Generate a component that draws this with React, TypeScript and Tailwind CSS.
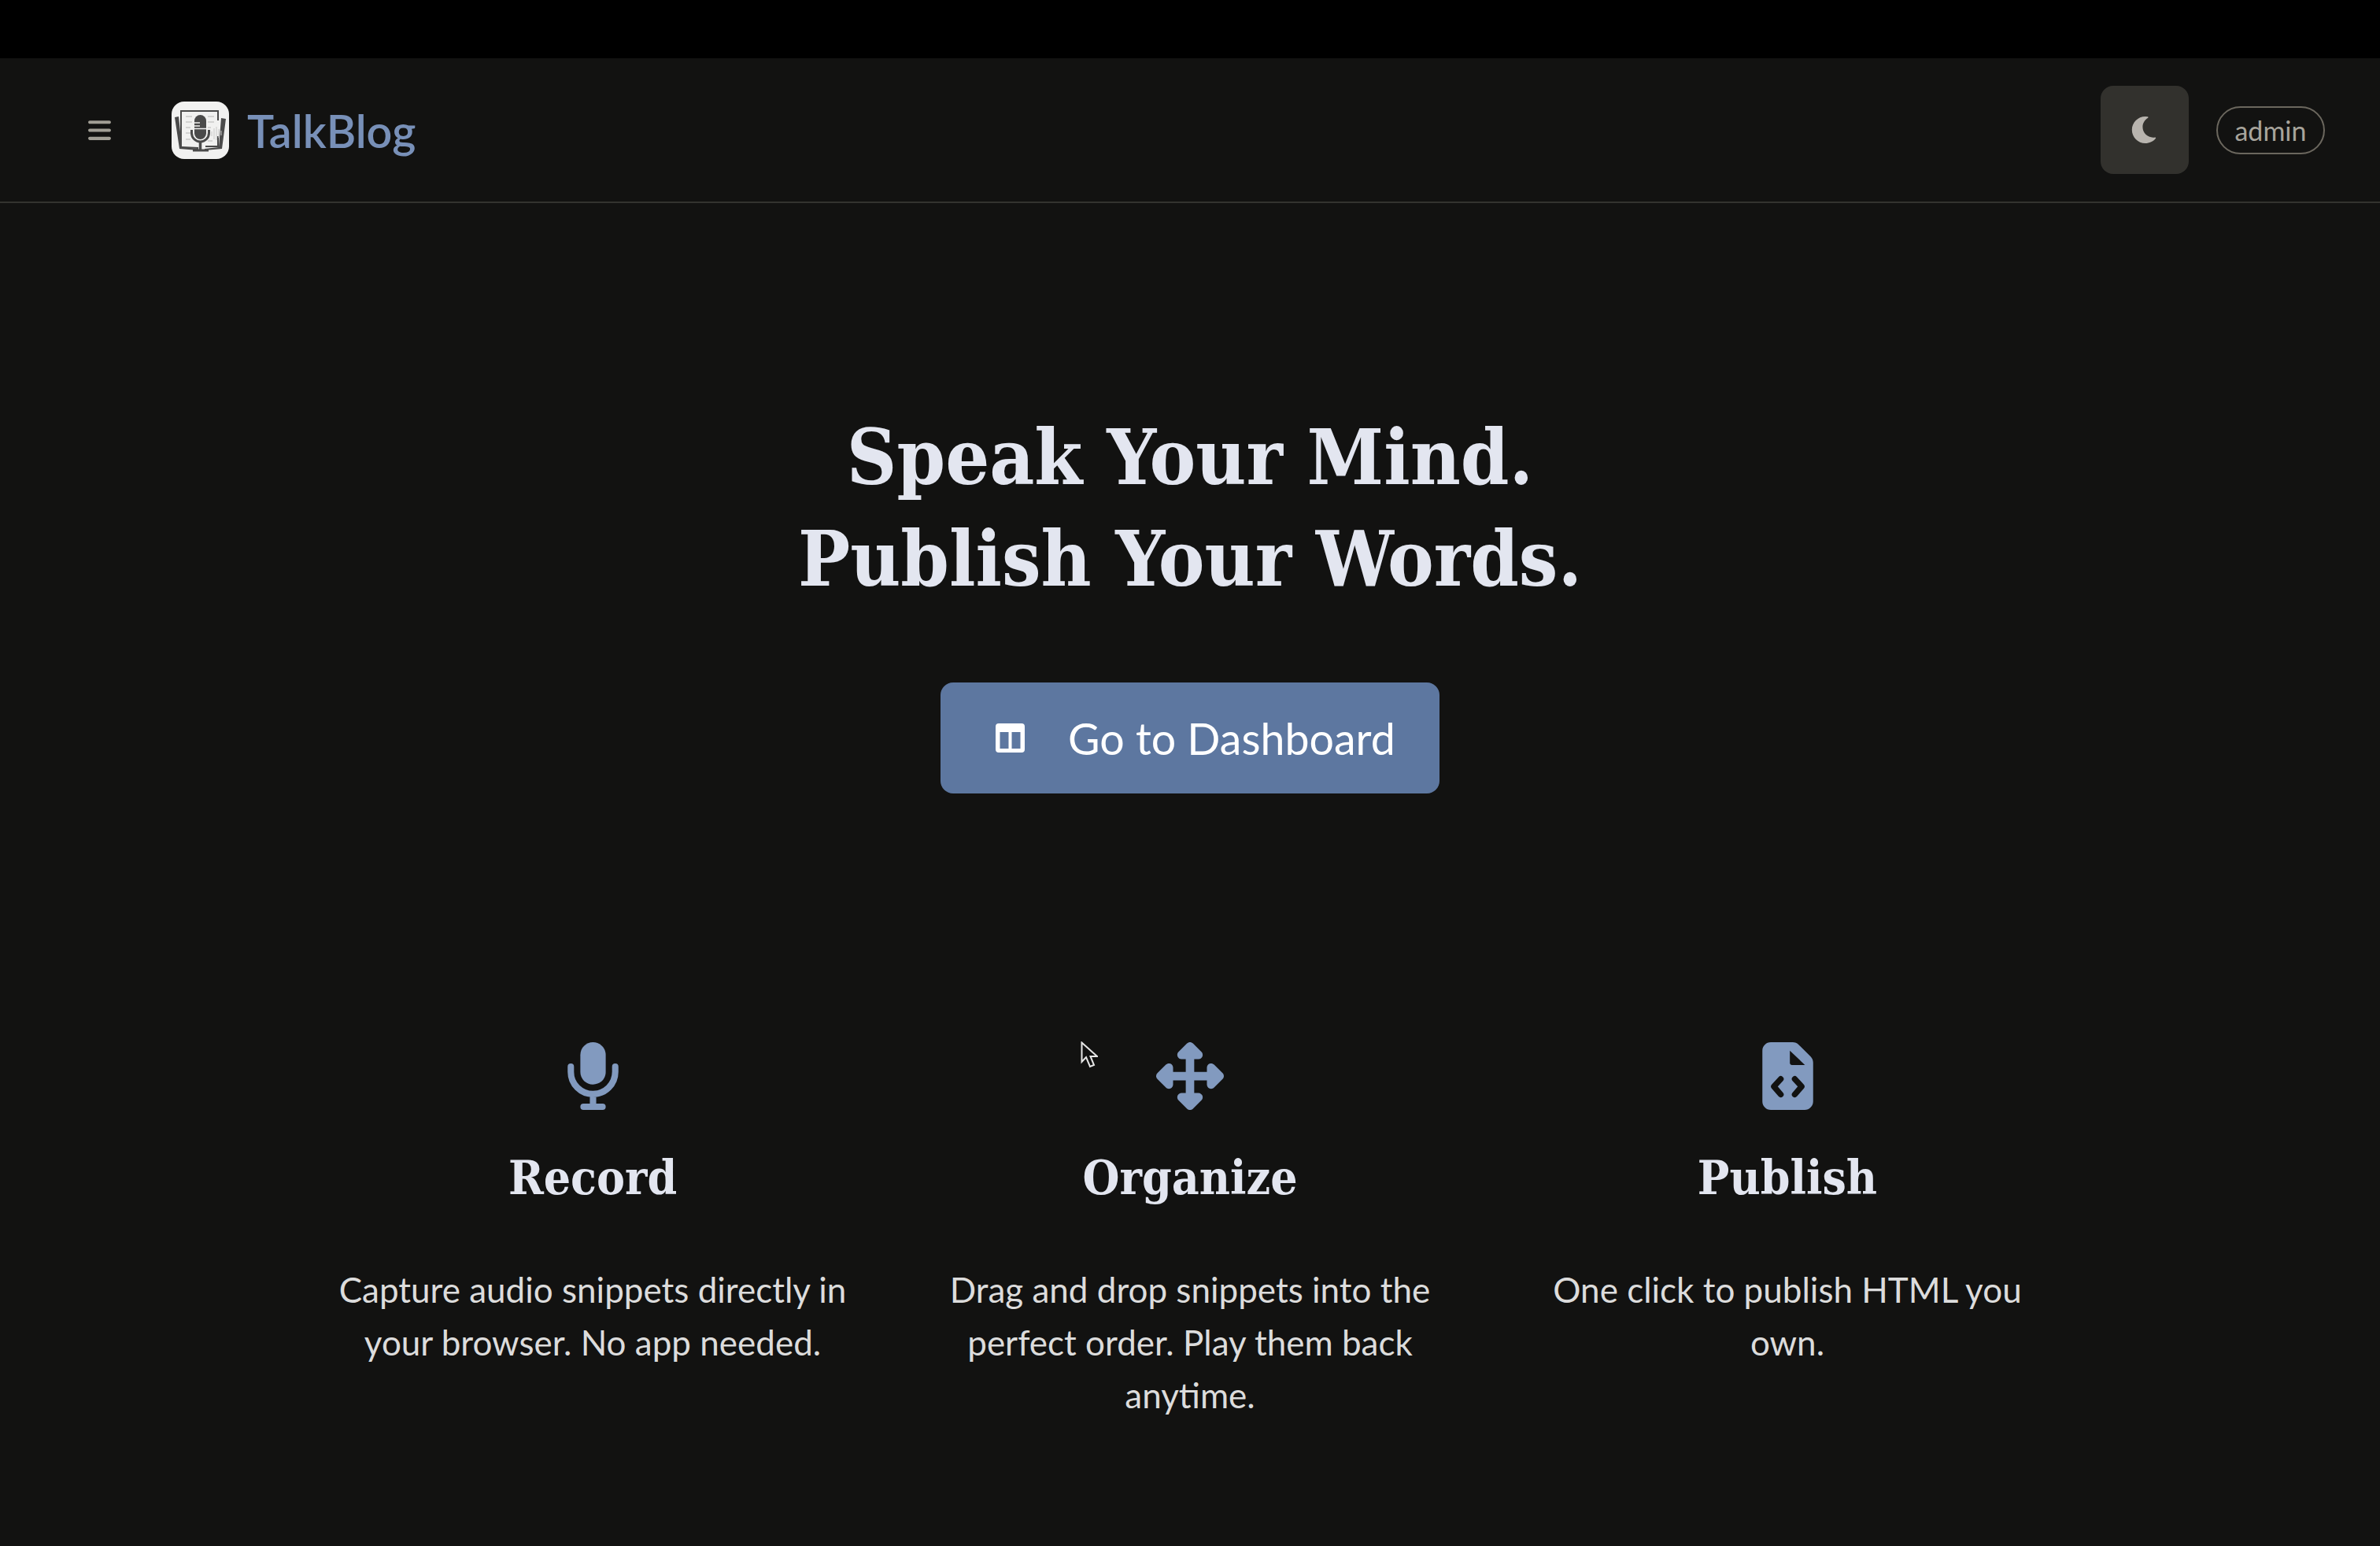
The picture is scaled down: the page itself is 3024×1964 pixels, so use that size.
import React from "react";
import { FaBars, FaUpDownLeftRight } from "react-icons/fa6";
import { FaMoon } from "react-icons/fa";

const Logo = () => (
  <div className="w-[73px] h-[73px] rounded-[16px] bg-[#f1f1f0] flex items-center justify-center">
    <svg viewBox="0 0 73 73" className="w-[73px] h-[73px]">
      <path d="M4 20 L9 19 L13 58 L34 60 L34 62 L10 60 Z" fill="#4a4a4a" />
      <path d="M69 22 L63 21 L60 58 L42 60 L42 62 L64 60 Z" fill="#4a4a4a" />
      <path d="M11 11 H60 V24 H58 V13 H13 V57 L34 58 V60 L11 59 Z" fill="#4a4a4a" />
      <path d="M60 44 V58 H43 V56 H58 V44 Z" fill="#4a4a4a" />
      <g stroke="#c9c9c8" strokeWidth="1.5">
        <path d="M18 19h8M18 26h8M18 33h6M18 40h6M18 48h6M46 19h8M46 26h8M46 33h4M46 50h6" />
        <path d="M51 38v6M54 34v14M57 32v17M60 35v11M63 37v6" strokeWidth="1" />
      </g>
      <rect x="29" y="17" width="15" height="31" rx="7.5" fill="#4a4a4a" />
      <path d="M29 27h7M29 31h7" stroke="#f1f1f0" strokeWidth="1.5" />
      <path d="M29 34.500h15" stroke="#f1f1f0" strokeWidth="1.5" />
      <path d="M25.500 36v4a11 11 0 0 0 22 0v-4" fill="none" stroke="#4a4a4a" strokeWidth="3" />
      <path d="M36.500 52v9" stroke="#4a4a4a" strokeWidth="3.500" />
      <path d="M27 62h20" stroke="#4a4a4a" strokeWidth="3" />
    </svg>
  </div>
);

const MicIcon = () => (
  <svg viewBox="0 0 384 512" className="w-[65px] h-[86px]" fill="currentColor">
    <path d="M192 0c-53 0-96 43-96 96v128c0 53 43 96 96 96s96-43 96-96V96c0-53-43-96-96-96z" />
    <path
      d="M24 184v40a168 168 0 0 0 336 0v-40M192 392v96M120 488h144"
      fill="none"
      stroke="currentColor"
      strokeWidth="48"
      strokeLinecap="round"
    />
  </svg>
);

const FileIcon = () => (
  <svg viewBox="0 0 384 512" className="w-[65px] h-[86px]" fill="currentColor">
    <path d="M64 0h165.500c17 0 33.300 6.700 45.300 18.700l90.500 90.500c12 12 18.700 28.300 18.700 45.300V448c0 35.300-28.700 64-64 64H64c-35.300 0-64-28.700-64-64V64C0 28.700 28.700 0 64 0z" />
    <path d="M208 64L322 172H224c-8.800 0-16-7.200-16-16z" fill="#121211" />
    <path
      d="M139 278L87 335L139 395M245 278L297 335L245 395"
      fill="none"
      stroke="#121211"
      strokeWidth="44"
      strokeLinecap="round"
      strokeLinejoin="round"
    />
  </svg>
);

const features = [
  {
    title: "Record",
    text: "Capture audio snippets directly in your browser. No app needed.",
    icon: <MicIcon />,
  },
  {
    title: "Organize",
    text: "Drag and drop snippets into the perfect order. Play them back anytime.",
    icon: <FaUpDownLeftRight className="w-[86px] h-[86px]" />,
  },
  {
    title: "Publish",
    text: "One click to publish HTML you own.",
    icon: <FileIcon />,
  },
];

export default function App() {
  return (
    <div className="relative min-h-screen bg-[#121211] font-['Lato',sans-serif] overflow-hidden">
      <div className="h-[74px] bg-black" />

      <header className="h-[184px] border-b-2 border-[#33332f] flex items-center justify-between pl-[112px] pr-[70px]">
        <div className="flex items-center">
          <button className="text-[#a19e95] mr-[77px]" aria-label="Menu">
            <FaBars className="w-[29px] h-[33px]" />
          </button>
          <a href="#" className="flex items-center gap-[23px] mt-[1px]">
            <Logo />
            <span className="text-[#7890b8] text-[57.5px] leading-none font-semibold">TalkBlog</span>
          </a>
        </div>
        <div className="flex items-center gap-[35px]">
          <button className="w-[112px] h-[112px] rounded-[16px] bg-[#32312d] text-[#b8b4ae] flex items-center justify-center" aria-label="Theme">
            <FaMoon className="w-[34px] h-[34px] mr-[3px]" />
          </button>
          <span className="h-[61px] w-[138px] rounded-full border-2 border-[#6b675e] text-[#a8a49c] text-[34px] flex items-center justify-center">
            admin
          </span>
        </div>
      </header>

      <main className="flex flex-col items-center pt-[258px]">
        <h1 className="font-['DejaVu_Serif_Condensed','Liberation_Serif',serif] font-bold text-[#e3e6f0] text-[98px] leading-[129px] text-center">
          Speak Your Mind.
          <br />
          Publish Your Words.
        </h1>

        <button className="mt-[93px] w-[634px] h-[141px] rounded-[16px] bg-[#5d77a0] text-white flex items-center pl-[70px]">
          <svg viewBox="0 0 37 37" className="w-[37px] h-[37px]" fill="currentColor">
            <path
              fillRule="evenodd"
              d="M4 0h29a4 4 0 0 1 4 4v29a4 4 0 0 1-4 4H4a4 4 0 0 1-4-4V4a4 4 0 0 1 4-4zM5.500 11v21h11V11zM20.500 11v21h11V11z"
            />
          </svg>
          <span className="ml-[55px] text-[55.5px] leading-none">Go to Dashboard</span>
        </button>

        <section className="mt-[316px] grid grid-cols-3 gap-[59px] w-[2218px]">
          {features.map((f) => (
            <div key={f.title} className="flex flex-col items-center text-center">
              <div className="text-[#829abf] h-[86px] flex items-center">{f.icon}</div>
              <h2 className="mt-[41px] font-['DejaVu_Serif_Condensed','Liberation_Serif',serif] font-bold text-[#e3e6f0] text-[60px] leading-[90px]">
                {f.title}
              </h2>
              <p className="mt-[64px] text-[#dcdcdc] text-[44px] leading-[67px]">{f.text}</p>
            </div>
          ))}
        </section>
      </main>

      <svg viewBox="0 0 22 34" className="absolute left-[1373px] top-[1323px] w-[22px] h-[34px]">
        <path d="M1.500 1.500 V26 L7 20 L12 32 L17 30 L12.500 19 H21 Z" fill="#111" stroke="#e6e6e6" strokeWidth="2" />
      </svg>
    </div>
  );
}
